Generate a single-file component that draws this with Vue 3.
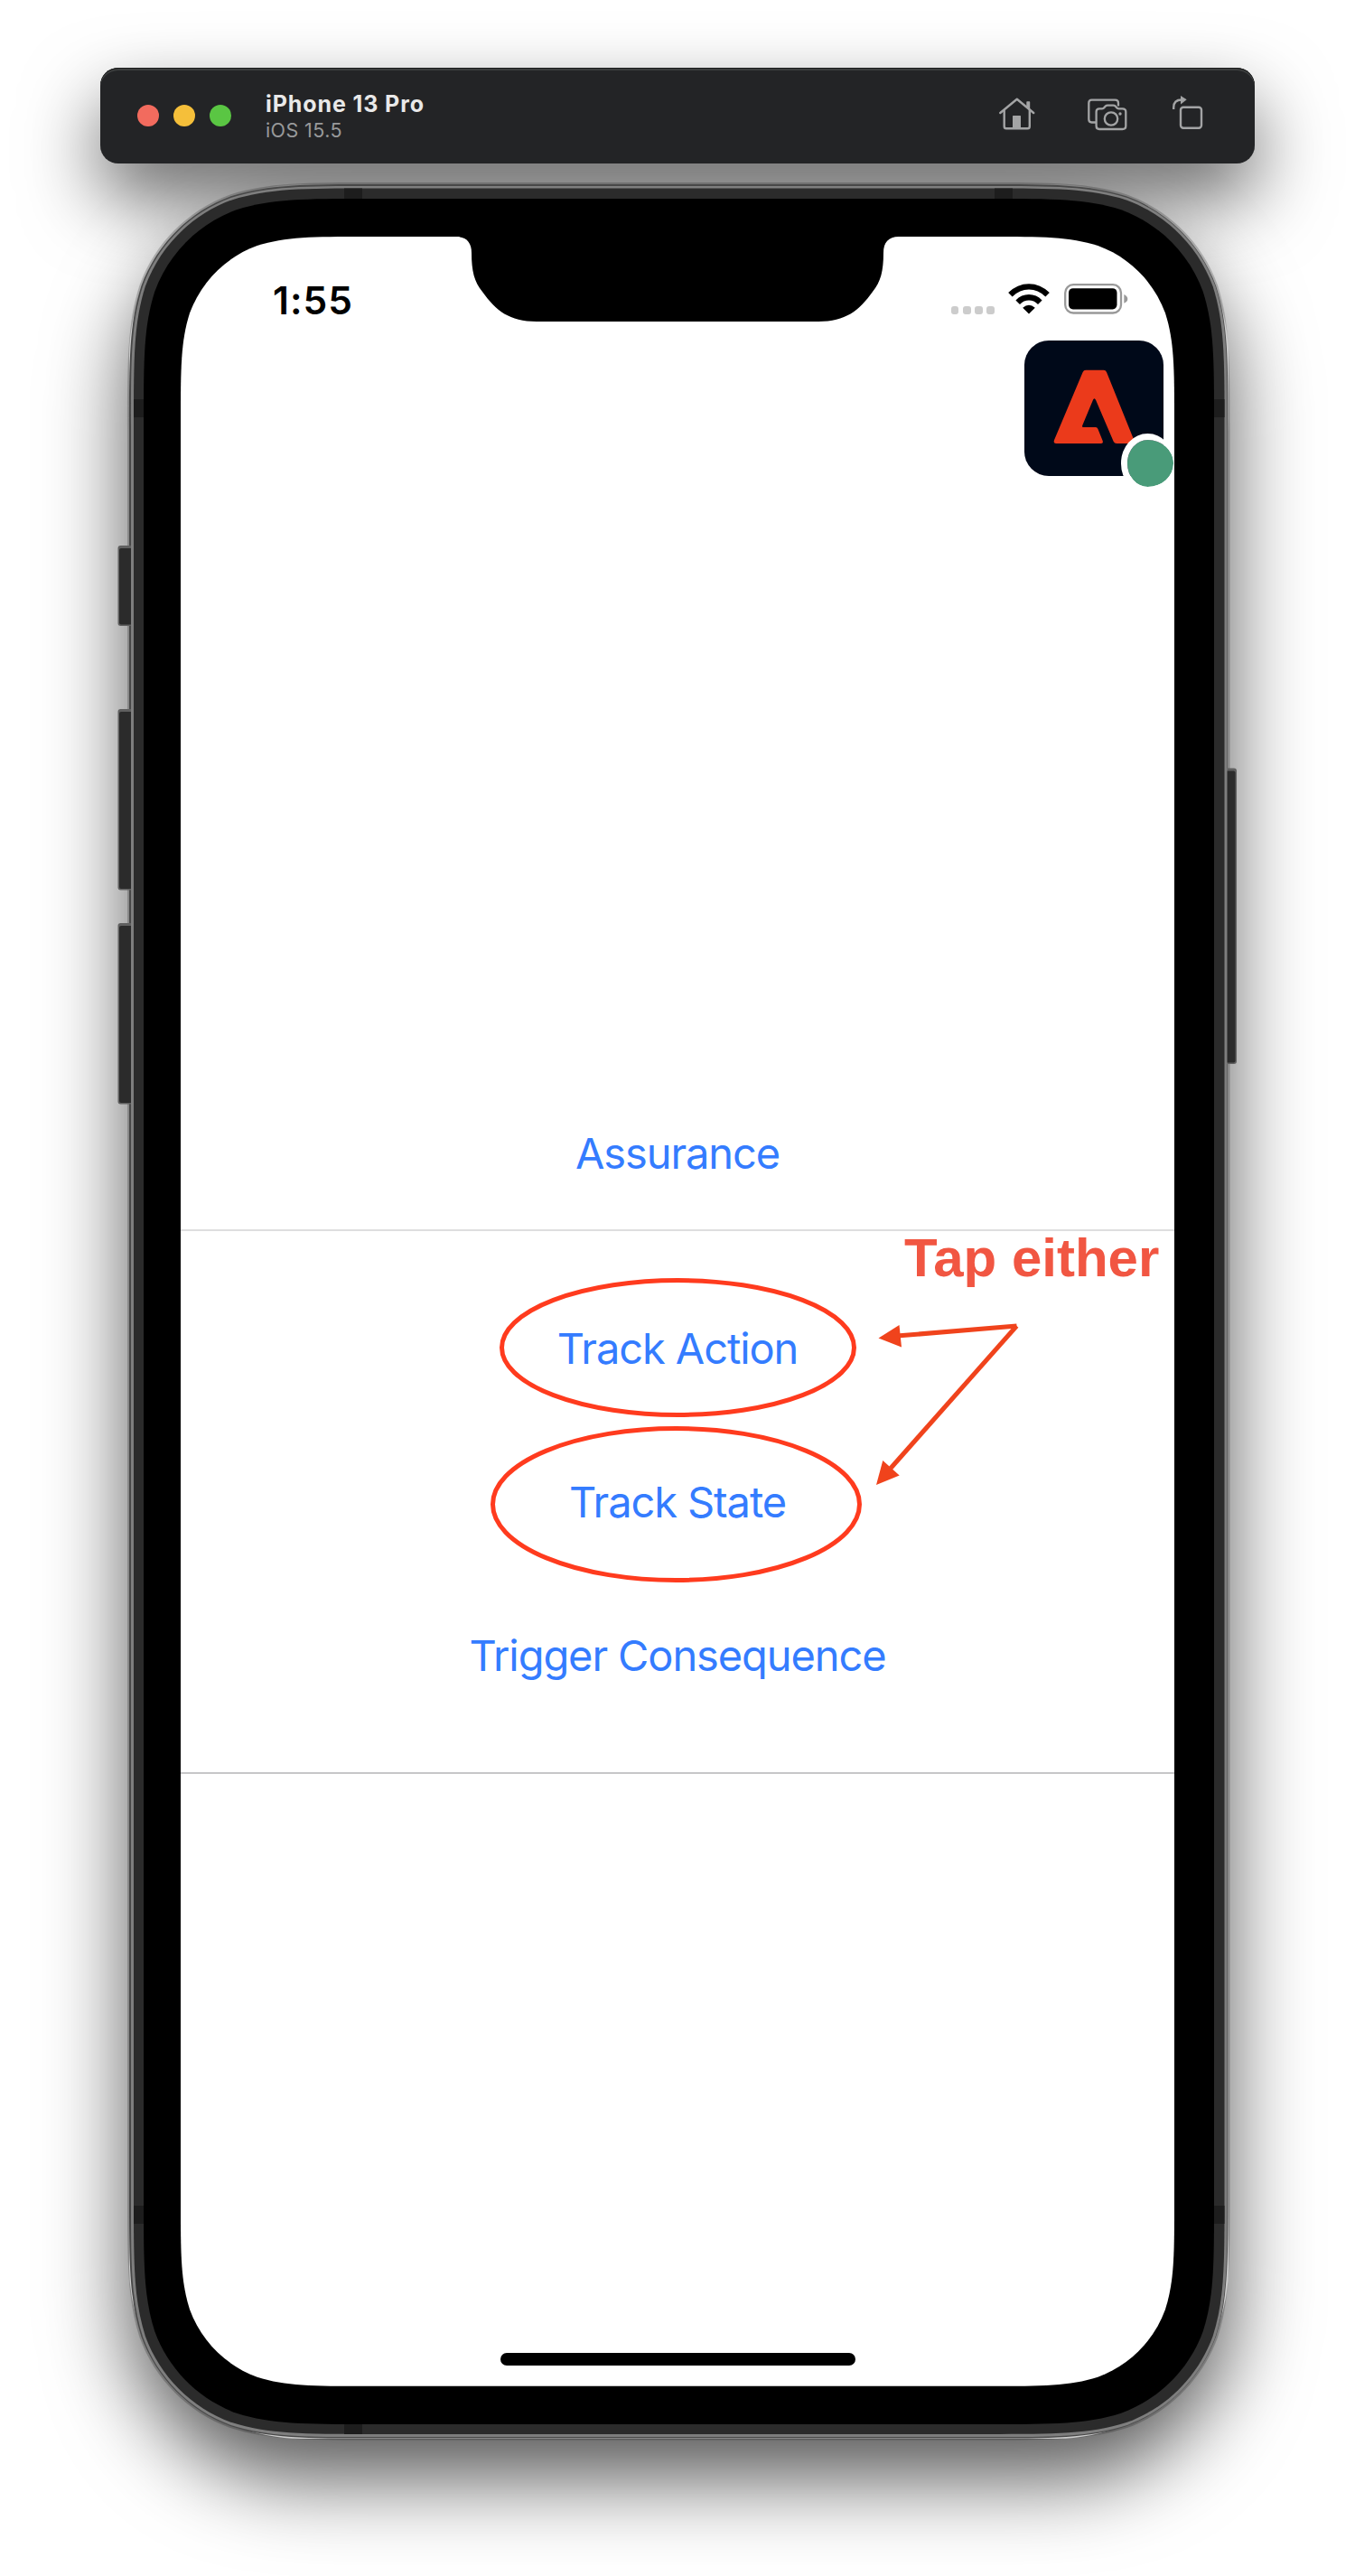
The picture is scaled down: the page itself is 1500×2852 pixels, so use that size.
<script setup>
const lights = ['#f26b5e', '#f5bf3a', '#5ac643']

const actions = [
  { label: 'Track Action', cls: 'action' },
  { label: 'Track State', cls: 'state' },
  { label: 'Trigger Consequence', cls: 'trigger' },
]

const sideButtons = [
  { x: 130.5, y: 604, w: 18, h: 89 },
  { x: 130.5, y: 785, w: 18, h: 200.5 },
  { x: 130.5, y: 1022, w: 18, h: 200.5 },
  { x: 1352, y: 850.5, w: 17, h: 327.5 },
]

const antennas = [
  { x: 381, y: 208.5, w: 20, h: 12 },
  { x: 1101, y: 208.5, w: 20, h: 12 },
  { x: 381, y: 2684, w: 20, h: 11 },
  { x: 148, y: 442, w: 11, h: 20 },
  { x: 148, y: 2442, w: 11, h: 20 },
  { x: 1344, y: 442, w: 11.5, h: 20 },
  { x: 1344, y: 2442, w: 11.5, h: 20 },
]

// Rounded rectangle with continuous-curvature corners.
function squircle(l, t, r, b, rad) {
  const corner = (cx, cy, ux, uy, vx, vy) => {
    // u points back along the incoming edge, v along the outgoing edge
    const p = (a, c) =>
      `${(cx + ux * a * rad + vx * c * rad).toFixed(2)},${(cy + uy * a * rad + vy * c * rad).toFixed(2)}`
    return (
      `L${p(1.528665, 0)} C${p(1.088493, 0)} ${p(0.868407, 0)} ${p(0.631494, 0.074911)} ` +
      `C${p(0.372824, 0.16906)} ${p(0.16906, 0.372824)} ${p(0.074911, 0.631494)} ` +
      `C${p(0, 0.868407)} ${p(0, 1.088493)} ${p(0, 1.528665)} `
    )
  }
  return (
    `M${l + rad * 1.528665},${t} ` +
    corner(r, t, -1, 0, 0, 1) +
    corner(r, b, 0, -1, -1, 0) +
    corner(l, b, 1, 0, 0, -1) +
    corner(l, t, 0, 1, 1, 0) +
    'Z'
  )
}

const halo = squircle(141, 202, 1361.5, 2701.5, 180)
const edge = squircle(143, 204, 1359.5, 2699.5, 178.5)
const rim = squircle(145, 206, 1358.5, 2698, 175)
const band = squircle(148, 208.5, 1355.5, 2695, 172)
const bezel = squircle(159, 220, 1344, 2684, 163)
const display = squircle(200, 262, 1300, 2641.7, 134)
</script>

<template>
  <div class="stage">
    <header class="titlebar">
      <div class="lights">
        <span v-for="c in lights" :key="c" class="light" :style="{ background: c }"></span>
      </div>
      <div class="titles">
        <div class="device">iPhone 13 Pro</div>
        <div class="os">iOS 15.5</div>
      </div>
      <nav class="tools">
        <svg width="40" height="36" viewBox="0 0 40 36" fill="none" stroke="#a3a4a5" stroke-width="2.400" stroke-linecap="round" stroke-linejoin="round">
          <path d="M1.300 17 L19.800 1.800 L38.200 17" />
          <path d="M5.700 14 V32 Q5.700 34.300 8 34.300 H31.500 Q33.800 34.300 33.800 32 V14" />
          <path d="M31 10.500 V5 H33.500 V12.500 Z" fill="#a3a4a5" stroke-width="1.400" />
          <path d="M15 34 V20.500 Q15 20 15.500 20 H23.500 Q24 20 24 20.500 V34 Z" fill="#a3a4a5" stroke="none" />
        </svg>
        <svg width="44" height="36" viewBox="0 0 44 36" fill="none" stroke="#a3a4a5" stroke-width="2.300" stroke-linejoin="round">
          <path d="M34 8.500 V5 Q34 1.600 30.500 1.600 H4.500 Q1.300 1.600 1.300 5 V23 Q1.300 26.500 4.500 26.500 H9" />
          <path d="M13 11.300 H16 Q17.500 11.300 18.500 10 L20 8.300 Q20.800 7.600 22 7.600 H28.500 Q29.700 7.600 30.500 8.300 L32 10 Q33 11.300 34.500 11.300 H38.500 Q42.300 11.300 42.300 14.800 V30.500 Q42.300 34 38.500 34 H13 Q9.600 34 9.600 30.500 V14.800 Q9.600 11.300 13 11.300 Z" />
          <circle cx="26" cy="22.500" r="7.200" />
          <circle cx="36" cy="17" r="1.700" fill="#a3a4a5" stroke="none" />
        </svg>
        <svg width="34" height="38" viewBox="0 0 34 38" fill="none" stroke="#a3a4a5" stroke-width="2.400">
          <path d="M1.200 16 V14 Q1.200 5.500 10 5.500" />
          <path d="M9 1 V10.500 L15.700 5.300 Z" fill="#a3a4a5" stroke="none" />
          <rect x="9" y="13.800" width="23" height="23" rx="3" />
        </svg>
      </nav>
    </header>

    <main class="phone">
      <div class="shadow"></div>
      <svg class="chassis" width="1500" height="2852" viewBox="0 0 1500 2852">
        <path :d="halo" fill="#000" fill-opacity="0.2" />
        <path :d="edge" fill="#484848" />
        <g v-for="b in sideButtons" :key="b.y">
          <rect :x="b.x" :y="b.y" :width="b.w" :height="b.h" rx="3" fill="#606060" />
          <rect :x="b.x + 1.5" :y="b.y + 3" :width="b.w - 3" :height="b.h - 4.5" rx="2" fill="#2b2b2b" />
        </g>
        <path :d="rim" fill="#7e7e7e" />
        <path :d="band" fill="#2b2b2b" />
        <rect v-for="(a, i) in antennas" :key="i" :x="a.x" :y="a.y" :width="a.w" :height="a.h" fill="#1d1d1d" />
        <path :d="bezel" fill="#000" />
        <path :d="display" fill="#fff" />
        <path
          d="M505,261 V262 C516.500,262 522,268.500 522,280 C522,300 525,312 534,323 C549,344 564,356 594,356 H906 C936,356 951,344 966,323 C975,312 978,300 978,280 C978,268.500 983.500,262 995,262 V261 Z"
          fill="#000"
        />
      </svg>

      <div class="screen">
        <div class="statusbar">
          <div class="clock">1:55</div>
          <div class="indicators">
            <div class="signal"><i v-for="n in 4" :key="n"></i></div>
            <svg class="wifi" width="46" height="34" viewBox="0 0 46 34">
              <path d="M23 33.500 L16.200 26.800 Q23 20.800 29.800 26.800 Z" />
              <g fill="none" stroke="#000" stroke-width="6.400">
                <path d="M2.400 12.300 Q11.500 3.400 23 3.400 T43.600 12.300" />
                <path d="M10.700 20.700 Q16 15.300 23 15.300 T35.300 20.700" />
              </g>
            </svg>
            <svg class="battery" width="71" height="34" viewBox="0 0 71 34">
              <rect x="1.200" y="1.200" width="61.800" height="31.300" rx="9" fill="none" stroke="#999" stroke-width="2.300" />
              <rect x="5" y="5.200" width="53.500" height="23.200" rx="4.800" />
              <path d="M66.300 12 Q70.300 14 70.300 16.900 T66.300 21.800 Z" fill="#999" />
            </svg>
          </div>
        </div>

        <div class="badge">
          <svg width="154" height="150" viewBox="580 591 462 450">
            <path
              fill="#eb3a1b"
              d="M784,689 H843 Q850,689 853,696 L944,922 Q948,933 938,933 H887 Q879,933 876,926 L817,788 Q812,779 808,788 L773,872 Q770,879 777,879 H817 Q822,879 824,884 L840,924 Q843,933 834,933 H686 Q675,933 679,922 L774,696 Q777,689 784,689 Z"
            />
          </svg>
          <span class="online"></span>
        </div>

        <section class="top-group">
          <a class="link assurance">Assurance</a>
        </section>
        <section class="group">
          <a v-for="a in actions" :key="a.label" class="link" :class="a.cls">{{ a.label }}</a>
        </section>
        <div class="home-indicator"></div>

        <svg class="notes" width="1100" height="2380" viewBox="200 262 1100 2380">
          <g fill="none" stroke="#ff3b1e" stroke-width="5">
            <ellipse cx="750.500" cy="1492" rx="195" ry="74.500" />
            <ellipse cx="748.500" cy="1665.500" rx="203" ry="84" />
          </g>
          <g fill="#f0431c" stroke="none">
            <path d="M996,1478.800 L1125.500,1468" stroke="#f0431c" stroke-width="5" />
            <path d="M986,1625.500 L1125.500,1468" stroke="#f0431c" stroke-width="5" />
            <path d="M972.500,1481.500 L995.500,1467 L998,1491.500 Z" />
            <path d="M970,1644 L977.300,1617 L995.700,1633.500 Z" />
          </g>
        </svg>
        <div class="callout">Tap either</div>
      </div>
    </main>
  </div>
</template>

<style>
body {
  margin: 0;
  background: #fff;
}
</style>

<style scoped>
.stage {
  display: flex;
  flex-direction: column;
  width: 1500px;
  height: 2852px;
  padding-top: 75px;
  box-sizing: border-box;
  overflow: hidden;
  background: #fff;
  font-family: Inter, "Liberation Sans", sans-serif;
}
.titlebar {
  position: relative;
  z-index: 1;
  display: flex;
  align-items: center;
  width: 1278px;
  height: 106px;
  margin-left: 111px;
  padding: 0 57px 0 41px;
  box-sizing: border-box;
  border-radius: 20px;
  background: #232426;
  box-shadow: inset 0 1px 0 #1a1b1b, inset 0 3px 0 #3c3e3e, 0 38px 84px rgba(0, 0, 0, 0.6);
}
.lights {
  display: flex;
  gap: 16px;
}
.light {
  width: 24px;
  height: 24px;
  border-radius: 50%;
}
.titles {
  margin-left: 38px;
  padding-top: 1px;
}
.device {
  color: #e9e9e9;
  font-size: 25px;
  font-weight: 700;
  line-height: 30px;
  letter-spacing: 0.9px;
  white-space: nowrap;
}
.os {
  color: #98999a;
  font-size: 21.5px;
  line-height: 28px;
  letter-spacing: 0.4px;
  white-space: nowrap;
}
.tools {
  display: flex;
  align-items: center;
  margin: -4px 0 0 auto;
}
.tools svg:nth-child(2) {
  margin: 2px 50px 0 58px;
}
.tools svg:nth-child(3) {
  margin-top: -4px;
}
.phone {
  position: relative;
  width: 1100px;
  height: 2380px;
  margin: 81px 0 0 200px;
}
.shadow {
  position: absolute;
  z-index: 0;
  inset: -58px -60px -58px -57px;
  border-radius: 190px;
  box-shadow: 0 44px 92px rgba(0, 0, 0, 0.66);
}
.chassis {
  position: absolute;
  z-index: 2;
  left: -200px;
  top: -262px;
}
.screen {
  position: relative;
  z-index: 3;
  display: flex;
  flex-direction: column;
  height: 2380px;
}
.statusbar {
  display: flex;
  justify-content: space-between;
  align-items: flex-start;
  height: 115px;
  padding: 52px 51px 0 102px;
  box-sizing: border-box;
}
.clock {
  margin-top: -7px;
  font-size: 42.5px;
  font-weight: 600;
  line-height: 52px;
  letter-spacing: 1px;
  color: #000;
}
.indicators {
  display: flex;
  align-items: flex-end;
}
.signal {
  display: flex;
  gap: 4.5px;
}
.signal i {
  width: 8.7px;
  height: 8.7px;
  border-radius: 3px;
  background: #ccc;
}
.wifi {
  margin: 0 16px 0 15px;
}
.badge {
  position: relative;
  align-self: flex-end;
  width: 154px;
  height: 150px;
  margin-right: 12.5px;
  border-radius: 27px;
  background: #000919;
}
.badge svg {
  display: block;
}
.online {
  position: absolute;
  left: 107px;
  top: 103px;
  width: 51.5px;
  height: 51.5px;
  border: 7.5px solid #fff;
  border-right-width: 1px;
  border-radius: 50%;
  background: #499b79;
  background-clip: padding-box;
}
.top-group {
  display: flex;
  flex-direction: column;
  align-items: center;
  height: 836px;
  padding-top: 720px;
  box-sizing: border-box;
  border-bottom: 2px solid #dededf;
}
.group {
  display: flex;
  flex-direction: column;
  align-items: center;
  height: 601px;
  padding-top: 100px;
  box-sizing: border-box;
  border-bottom: 2px solid #c6c6c8;
}
.link {
  color: #347cff;
  font-size: 47px;
  line-height: 60px;
  letter-spacing: -1.1px;
  white-space: nowrap;
}
.group .link + .link {
  margin-top: 110px;
}
.home-indicator {
  width: 393px;
  height: 14px;
  margin: auto auto 23px;
  border-radius: 7px;
  background: #000;
}
.notes {
  position: absolute;
  inset: 0;
}
.callout {
  position: absolute;
  left: 801px;
  top: 1096px;
  color: #f15642;
  font: bold 60px/70px "Liberation Sans", Arial, sans-serif;
  white-space: nowrap;
}
</style>
